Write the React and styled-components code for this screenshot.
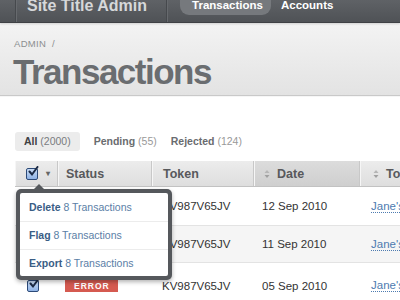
import styled, { createGlobalStyle } from 'styled-components';

const GlobalStyle = createGlobalStyle`
  body {
    margin: 0;
    background: #fff;
    overflow: hidden;
    font-family: "Liberation Sans", Arial, Helvetica, sans-serif;
  }
`;

const columns = [
  { key: 'check', width: 43 },
  { key: 'status', label: 'Status', width: 94, pad: 8 },
  { key: 'token', label: 'Token', width: 102, pad: 11 },
  { key: 'date', label: 'Date', width: 106, sortable: true, active: true, pad: 10 },
  { key: 'to', label: 'To', width: 120, sortable: true, pad: 13 },
];

const rows = [
  { token: 'KV987V65JV', date: '12 Sep 2010', to: "Jane's", h: 38 },
  { token: 'KV987V65JV', date: '11 Sep 2010', to: "Jane's", alt: true, h: 36 },
  { token: 'KV987V65JV', date: '05 Sep 2010', to: "Jane's", error: true, h: 45 },
];

const tabs = [
  { label: 'All', count: 2000, active: true },
  { label: 'Pending', count: 55 },
  { label: 'Rejected', count: 124 },
];

const actions = ['Delete', 'Flag', 'Export'];

const App = () => {
  return (
    <>
      <GlobalStyle />
      <Nav>
        <NavInner>
          <Brand>Site Title Admin</Brand>
          <NavLinks>
            <NavLink $active>Transactions</NavLink>
            <NavLink>Accounts</NavLink>
          </NavLinks>
        </NavInner>
      </Nav>
      <PageHeader>
        <Crumb>ADMIN &nbsp;/</Crumb>
        <Title>Transactions</Title>
      </PageHeader>
      <Content>
        <Tabs>
          {tabs.map((t) => (
            <Tab key={t.label} $active={t.active}>
              <b>{t.label}</b> <span>({t.count})</span>
            </Tab>
          ))}
        </Tabs>
        <TableWrap>
          <HeadRow>
            {columns.map((c) => (
              <HeadCell
                key={c.key}
                $w={c.width}
                $pad={c.pad}
                $active={c.active}
                $check={c.key === 'check'}
              >
                {c.key === 'check' ? (
                  <>
                    <CheckBox>
                      <CheckMark />
                    </CheckBox>
                    <Caret>▾</Caret>
                  </>
                ) : (
                  <>
                    {c.sortable && <SortIcon />}
                    {c.label}
                  </>
                )}
              </HeadCell>
            ))}
          </HeadRow>
          {rows.map((r, i) => (
            <Row key={i} $alt={r.alt} $h={r.h}>
              <Cell $w={43} $pad={12}>
                <CheckBox>
                  <CheckMark />
                </CheckBox>
              </Cell>
              <Cell $w={94} $pad={7}>{r.error && <Badge>ERROR</Badge>}</Cell>
              <Cell $w={102} $pad={10}>{r.token}</Cell>
              <Cell $w={106} $pad={8}>{r.date}</Cell>
              <Cell $w={120} $pad={11}>
                <Link>{r.to}</Link>
              </Cell>
            </Row>
          ))}
          <Popup>
            <PopupInner>
              {actions.map((a) => (
                <PopupItem key={a}>
                  <b>{a}</b> 8 Transactions
                </PopupItem>
              ))}
            </PopupInner>
          </Popup>
        </TableWrap>
      </Content>
    </>
  );
};
export default App;

const SortIcon = () => (
  <SortSvg width="6" height="10" viewBox="0 0 6 10">
    <path d="M3 1 L5.5 4 L0.5 4 Z" fill="#b5b5b5" />
    <path d="M3 9 L5.5 6 L0.5 6 Z" fill="#a0a0a0" />
  </SortSvg>
);

const CheckMark = () => (
  <svg width="12" height="12" viewBox="0 0 12 12">
    <path d="M2.5 5.5 L5 8.5 L10.5 1" stroke="#1b2a44" strokeWidth="2" fill="none" strokeLinecap="round" />
  </svg>
);

const Nav = styled.div`
  height: 22px;
  overflow: hidden;
  background: linear-gradient(#5f6266, #4f5256);
  border-bottom: 1px solid #3f4145;
  box-shadow: 0 1px 2px rgb(0 0 0 / 15%);
  position: relative;
  z-index: 1;
`;

const NavInner = styled.div`
  display: flex;
  align-items: flex-start;
  height: 32px;
  margin-top: -10px;
  padding-left: 15px;
`;

const Brand = styled.div`
  height: 32px;
  line-height: 32px;
  padding: 0 19px 0 11px;
  border-left: 1px solid #46494d;
  border-right: 1px solid #46494d;
  box-shadow: inset 1px 0 #676a6e, 1px 0 #676a6e;
  color: #d6d8da;
  font-size: 16px;
  font-weight: bold;
`;

const NavLinks = styled.div`
  display: flex;
  margin-left: 13px;
`;

const NavLink = styled.div`
  height: 23px;
  line-height: 27px;
  margin-top: 2px;
  padding: ${(p) => (p.$active ? '0 8px 0 12px' : '0 10px')};
  border-radius: 9px;
  color: #fff;
  font-size: 11.5px;
  font-weight: bold;
  background: ${(p) => (p.$active ? '#76797d' : 'transparent')};
`;

const PageHeader = styled.div`
  height: 73px;
  background: linear-gradient(#f3f3f3, #e3e3e3);
  border-bottom: 1px solid #c9c9c9;
  box-shadow: 0 1px 0 #f6f6f6;
  padding: 15px 0 0 14px;
  box-sizing: border-box;
`;

const Crumb = styled.div`
  color: #8c8e90;
  font-size: 9.5px;
  letter-spacing: 0.3px;
  line-height: 12px;
`;

const Title = styled.h1`
  margin: 2px 0 0 -1px;
  font-size: 35px;
  line-height: 40px;
  font-weight: bold;
  color: #6a6d70;
  letter-spacing: -1.5px;
`;

const Content = styled.div`
  padding: 36px 0 0 15px;
`;

const Tabs = styled.div`
  display: flex;
  height: 19px;
`;

const Tab = styled.div`
  padding: ${(p) => (p.$active ? '0 9px' : '0 7px')};
  margin-right: ${(p) => (p.$active ? '7px' : '0')};
  line-height: 19px;
  border-radius: 3px;
  font-size: 10.5px;
  color: #888;
  background: ${(p) => (p.$active ? '#ececec' : 'transparent')};
  b {
    color: ${(p) => (p.$active ? '#3f4144' : '#6a6c6f')};
  }
  span {
    color: ${(p) => (p.$active ? '#7a7c7f' : '#999')};
  }
`;

const TableWrap = styled.div`
  position: relative;
  margin-top: 10px;
  width: 480px;
`;

const HeadRow = styled.div`
  display: flex;
  height: 25px;
  border-bottom: 1px solid #c2c2c2;
`;

const HeadCell = styled.div`
  width: ${(p) => p.$w}px;
  flex: none;
  box-sizing: border-box;
  display: flex;
  align-items: center;
  gap: ${(p) => (p.$check ? '8px' : '7px')};
  padding-left: ${(p) => (p.$check ? 11 : p.$pad)}px;
  font-size: 12.5px;
  font-weight: bold;
  color: #58595c;
  background: ${(p) =>
    p.$active
      ? 'linear-gradient(#dcdcdc, #cfcfcf)'
      : 'linear-gradient(#ececec, #dedede)'};
  border-right: 1px solid #c8c8c8;
  box-shadow: inset 1px 0 #f6f6f6;
`;

const SortSvg = styled.svg`
  flex: none;
`;

const Caret = styled.span`
  font-size: 8px;
  color: #666;
`;

const CheckBox = styled.span`
  width: 10px;
  height: 10px;
  border: 1px solid #2c4a78;
  border-radius: 2px;
  background: linear-gradient(#c9dcf5, #8fb3e6);
  display: inline-flex;
  align-items: center;
  justify-content: center;
  flex: none;
  svg {
    margin: -3px -2px 0 0;
  }
`;

const Row = styled.div`
  display: flex;
  height: ${(p) => p.$h}px;
  background: ${(p) => (p.$alt ? '#f5f5f5' : '#fff')};
  border-bottom: 1px solid #e3e3e3;
`;

const Cell = styled.div`
  width: ${(p) => p.$w}px;
  flex: none;
  box-sizing: border-box;
  display: flex;
  align-items: center;
  padding-left: ${(p) => p.$pad}px;
  font-size: 11.5px;
  color: #333;
`;

const Badge = styled.span`
  background: #d55a50;
  color: #fff;
  font-size: 8.5px;
  font-weight: bold;
  letter-spacing: 1px;
  padding: 0 8px 0 9px;
  line-height: 12px;
`;

const Link = styled.span`
  color: #4d7bb0;
  border-bottom: 1px dotted #4d7bb0;
  line-height: 12px;
`;

const Popup = styled.div`
  position: absolute;
  left: 1px;
  top: 28px;
  width: 156px;
  padding: 4px;
  box-sizing: border-box;
  background: #55585c;
  border-radius: 5px;
  box-shadow: 0 2px 4px rgb(0 0 0 / 30%);
  &::before {
    content: '';
    position: absolute;
    left: 18px;
    top: -5px;
    border-left: 5px solid transparent;
    border-right: 5px solid transparent;
    border-bottom: 5px solid #55585c;
  }
`;

const PopupInner = styled.div`
  background: #fff;
  border-radius: 2px;
`;

const PopupItem = styled.div`
  height: 28px;
  box-sizing: border-box;
  line-height: 27px;
  padding-left: 9px;
  font-size: 10.5px;
  color: #5a7ea6;
  border-top: 1px solid #ececec;
  &:first-child {
    border-top: none;
    line-height: 28px;
  }
  &:last-child {
    height: 27px;
  }
  b {
    color: #3a5d85;
  }
`;
